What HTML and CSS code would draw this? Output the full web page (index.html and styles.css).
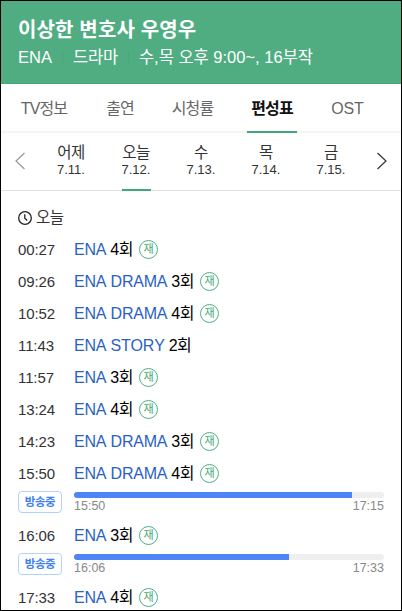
FILE: index.html
```html
<!DOCTYPE html>
<html lang="ko">
<head>
<meta charset="utf-8">
<title>이상한 변호사 우영우 편성표</title>
<link rel="stylesheet" href="styles.css">
</head>
<body>
<main class="card">
  <header class="header">
    <h1 class="title">이상한 변호사 우영우</h1>
    <div class="meta"><span class="channel">ENA</span><i class="divider"></i><span class="genre">드라마</span><i class="divider"></i><span class="airtime">수,목 오후 9:00~, 16부작</span></div>
  </header>
  <nav class="tabs">
    <span class="tab">TV정보</span><span class="tab">출연</span><span class="tab">시청률</span><span class="tab active">편성표</span><span class="tab latin">OST</span>
  </nav>
  <section class="dates">
    <svg class="arrow prev" viewBox="0 0 10 18"><path d="M9.5 1 L1 9 L9.5 17"/></svg>
    <div class="day"><span class="name">어제</span><span class="date">7.11.</span></div>
    <div class="day today"><span class="name">오늘</span><span class="date">7.12.</span></div>
    <div class="day"><span class="name">수</span><span class="date">7.13.</span></div>
    <div class="day"><span class="name">목</span><span class="date">7.14.</span></div>
    <div class="day"><span class="name">금</span><span class="date">7.15.</span></div>
    <svg class="arrow next" viewBox="0 0 10 18"><path d="M.5 1 L9 9 L.5 17"/></svg>
  </section>
  <section class="schedule">
    <h2 class="heading"><svg class="clock" viewBox="0 0 14 14"><circle cx="7" cy="7" r="6.3"/><path d="M6.8 3.2 V7.2 L9.2 9.4"/></svg><span>오늘</span></h2>
    <div class="row"><span class="time">00:27</span><span class="station">ENA</span><span class="episode">4회</span><span class="rerun">재</span></div>
    <div class="row"><span class="time">09:26</span><span class="station">ENA DRAMA</span><span class="episode">3회</span><span class="rerun">재</span></div>
    <div class="row"><span class="time">10:52</span><span class="station">ENA DRAMA</span><span class="episode">4회</span><span class="rerun">재</span></div>
    <div class="row"><span class="time">11:43</span><span class="station">ENA STORY</span><span class="episode">2회</span></div>
    <div class="row"><span class="time">11:57</span><span class="station">ENA</span><span class="episode">3회</span><span class="rerun">재</span></div>
    <div class="row"><span class="time">13:24</span><span class="station">ENA</span><span class="episode">4회</span><span class="rerun">재</span></div>
    <div class="row"><span class="time">14:23</span><span class="station">ENA DRAMA</span><span class="episode">3회</span><span class="rerun">재</span></div>
    <div class="row"><span class="time">15:50</span><span class="station">ENA DRAMA</span><span class="episode">4회</span><span class="rerun">재</span></div>
    <div class="live">
      <span class="badge">방송중</span>
      <div class="progress"><div class="track"><div class="fill" style="width:89.8%"></div></div><div class="range"><span>15:50</span><span>17:15</span></div></div>
    </div>
    <div class="row"><span class="time">16:06</span><span class="station">ENA</span><span class="episode">3회</span><span class="rerun">재</span></div>
    <div class="live">
      <span class="badge">방송중</span>
      <div class="progress"><div class="track"><div class="fill" style="width:69.3%"></div></div><div class="range"><span>16:06</span><span>17:33</span></div></div>
    </div>
    <div class="row"><span class="time">17:33</span><span class="station">ENA</span><span class="episode">4회</span><span class="rerun">재</span></div>
  </section>
</main>
</body>
</html>
```
FILE: styles.css
```css
* { box-sizing: border-box; }
body {
  margin: 0;
  font-family: "Liberation Sans", "Noto Sans CJK KR", sans-serif;
  color: #333;
  background: #fff;
}
.card {
  width: 402px;
  height: 611px;
  border: 1px solid #000;
  overflow: hidden;
  background: #fff;
}
span { white-space: nowrap; }
svg { fill: none; flex: none; }

.header {
  height: 83px;
  padding: 15px 17px 0;
  background: #50ad82;
  border-bottom: 1px solid #47a67a;
  color: #fff;
}
.title {
  margin: 0;
  font-size: 20px;
  line-height: 28px;
  font-weight: 700;
  letter-spacing: .15px;
}
.meta {
  display: flex;
  align-items: center;
  height: 26px;
  font-size: 16.5px;
  line-height: 26px;
}
.genre { letter-spacing: -.2px; }
.airtime { letter-spacing: 0; }
.divider {
  width: 1px;
  height: 12px;
  margin: 0 10px;
  background: #4ba67d;
}

.tabs {
  display: grid;
  grid-template-columns: 56px 36px 49px 50px 41px;
  column-gap: 30px;
  height: 49px;
  padding-left: 15px;
  border-bottom: 2px solid #f5f5f5;
}
.tab {
  height: 49px;
  line-height: 49px;
  font-size: 16px;
  letter-spacing: -.9px;
  text-align: center;
  color: #666;
}
.latin { letter-spacing: -.2px; }
.active {
  font-weight: 700;
  color: #111;
  border-bottom: 2px solid #40a877;
}

.dates {
  display: flex;
  align-items: flex-start;
  height: 58px;
  padding-left: 14px;
  border-bottom: 1px solid #e2e2e2;
}
.arrow { width: 10px; height: 18px; margin-top: 19px; stroke-width: 1.2; }
.prev { stroke: #999; margin-right: 13.5px; }
.next { stroke: #333; margin-left: 13.5px; }
.day {
  width: 65px;
  height: 58px;
  padding-top: 10px;
  display: flex;
  flex-direction: column;
  align-items: center;
  position: relative;
}
.name { height: 19px; line-height: 20px; font-size: 15.5px; letter-spacing: -.5px; }
.date { height: 16px; line-height: 16px; font-size: 13px; }
.today::after {
  content: "";
  position: absolute;
  left: 18px;
  bottom: 0;
  width: 29px;
  height: 2px;
  background: #40a877;
}

.schedule { padding: 15px 17px 0; }
.heading {
  display: flex;
  align-items: center;
  gap: 4px;
  height: 24px;
  margin: 0 0 4px;
  font-size: 15.5px;
  line-height: 24px;
  font-weight: 400;
  letter-spacing: -.5px;
}
.clock { width: 14px; height: 14px; margin-top: -1px; stroke: #222; stroke-width: 1.3; }
.row {
  display: flex;
  align-items: center;
  height: 32px;
  line-height: 32px;
  font-size: 16px;
}
.time { width: 56px; font-size: 15px; letter-spacing: -.1px; }
.station { color: #2a62c4; letter-spacing: -.2px; font-kerning: none; }
.episode { margin-left: 4px; color: #000; letter-spacing: -.5px; }
.rerun {
  width: 19px;
  height: 19px;
  margin: -1px 0 0 6px;
  border: 1px solid #4ab184;
  border-radius: 50%;
  font-size: 11px;
  line-height: 16px;
  text-align: center;
  color: #40a877;
}
.live { display: flex; height: 30px; }
.badge {
  width: 44px;
  height: 22px;
  margin: 1px 12px 0 0;
  border: 1px solid #b3d2fb;
  border-radius: 4px;
  color: #3d82ef;
  font-size: 11.5px;
  line-height: 20px;
  font-weight: 700;
  text-align: center;
  letter-spacing: -.4px;
}
.progress { width: 310px; padding-top: 2px; }
.track { height: 6px; border-radius: 3px; background: #efefef; overflow: hidden; }
.fill { height: 6px; background: #4f86f7; }
.range {
  display: flex;
  justify-content: space-between;
  font-size: 12.5px;
  line-height: 17px;
  color: #888;
}
```
